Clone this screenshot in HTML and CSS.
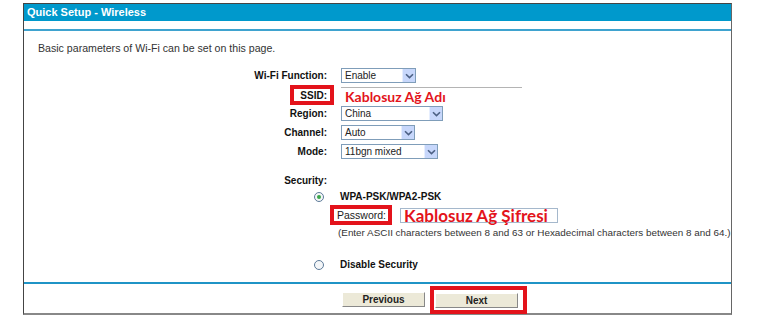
FILE: index.html
```html
<!DOCTYPE html>
<html lang="en">
<head>
    <meta charset="UTF-8">
    <title>Quick Setup - Wireless</title>
    <link rel="stylesheet" href="styles.css">
</head>
<body>
    <div class="frame">
        <div class="title">Quick Setup - Wireless</div>
        <div class="content">
            <p class="intro">Basic parameters of Wi-Fi can be set on this page.</p>

            <div class="fields">
                <div class="lbl">Wi-Fi Function:</div>
                <div class="val">
                    <div class="select w-enable"><span>Enable</span><span class="arrow"><svg width="9" height="6" viewBox="0 0 9 6"><path d="M1 1.2 L4.5 4.6 L8 1.2" fill="none" stroke="#4d6185" stroke-width="1.6"/></svg></span></div>
                </div>

                <div class="lbl"><span class="mark ssid-mark">SSID:</span></div>
                <div class="val"><div class="ssid-field">Kablosuz Ağ Adı</div></div>

                <div class="lbl">Region:</div>
                <div class="val">
                    <div class="select w-region"><span>China</span><span class="arrow"><svg width="9" height="6" viewBox="0 0 9 6"><path d="M1 1.2 L4.5 4.6 L8 1.2" fill="none" stroke="#4d6185" stroke-width="1.6"/></svg></span></div>
                </div>

                <div class="lbl">Channel:</div>
                <div class="val">
                    <div class="select w-channel"><span>Auto</span><span class="arrow"><svg width="9" height="6" viewBox="0 0 9 6"><path d="M1 1.2 L4.5 4.6 L8 1.2" fill="none" stroke="#4d6185" stroke-width="1.6"/></svg></span></div>
                </div>

                <div class="lbl">Mode:</div>
                <div class="val">
                    <div class="select w-mode"><span>11bgn mixed</span><span class="arrow"><svg width="9" height="6" viewBox="0 0 9 6"><path d="M1 1.2 L4.5 4.6 L8 1.2" fill="none" stroke="#4d6185" stroke-width="1.6"/></svg></span></div>
                </div>
            </div>

            <div class="security">
                <div class="lbl">Security:</div>
                <div></div>

                <div class="lbl"><span class="radio checked"></span></div>
                <div class="val opt">WPA-PSK/WPA2-PSK</div>

                <div></div>
                <div class="val pw-row">
                    <span class="mark pw-mark">Password:</span>
                    <span class="pw-input">Kablosuz Ağ Şifresi</span>
                </div>

                <div></div>
                <div class="val note">(Enter ASCII characters between 8 and 63 or Hexadecimal characters between 8 and 64.)</div>

                <div class="gap-row"></div>
                <div class="gap-row"></div>

                <div class="lbl"><span class="radio"></span></div>
                <div class="val opt">Disable Security</div>
            </div>
        </div>

        <div class="footer">
            <button class="btn">Previous</button>
            <span class="next-mark"><button class="btn">Next</button></span>
        </div>
    </div>
</body>
</html>
```

FILE: styles.css
```css
* {
    margin: 0;
    padding: 0;
    box-sizing: border-box;
}

body {
    background: #ffffff;
    font-family: "Liberation Sans", Arial, sans-serif;
    font-size: 10px;
    color: #222;
}

.frame {
    width: 709px;
    margin: 3px 0 0 23px;
    border: 1px solid #444;
    border-right-color: #666;
    border-bottom: 2px solid #888;
}

.title {
    height: 17px;
    line-height: 17px;
    background: #0099cc;
    color: #fff;
    font-weight: bold;
    font-size: 11px;
    padding-left: 3px;
}

.content {
    margin-top: 8px;
    border-top: 2px solid #3fa3cf;
    padding-bottom: 9px;
    border-bottom: 2px solid #1f94c6;
}

.intro {
    margin: 10px 0 0 14px;
    font-size: 10.6px;
    line-height: 14px;
    color: #333;
}

.fields,
.security {
    display: grid;
    grid-template-columns: 303px 1fr;
    column-gap: 14px;
    align-items: center;
}

.fields {
    margin-top: 11px;
    grid-auto-rows: 19px;
}

.security {
    margin-top: 12px;
    grid-template-rows: 14px 18px 20px 14px 16px 18px;
}

.lbl {
    text-align: right;
    font-weight: bold;
    color: #111;
    white-space: nowrap;
}

.val {
    display: flex;
    align-items: center;
}

.select {
    height: 15px;
    display: flex;
    align-items: center;
    justify-content: space-between;
    border: 1px solid #7f9db9;
    background: #fff;
    padding-left: 3px;
    font-size: 10px;
    color: #222;
}

.select .arrow {
    width: 13px;
    height: 13px;
    display: flex;
    align-items: center;
    justify-content: center;
    background: #c7d7fb;
    border-left: 1px solid #e6eefe;
}

.w-enable { width: 75px; }
.w-region { width: 102px; }
.w-channel { width: 74px; }
.w-mode { width: 97px; }

.mark {
    display: inline-block;
    border: 4px solid #e3131b;
    background: #fff;
}

.ssid-mark {
    padding: 2px 3px 0 6px;
    margin-right: -7px;
    line-height: 10px;
}

.ssid-field {
    width: 181px;
    height: 19px;
    margin-top: 3px;
    border-top: 1px solid #b4b4b4;
    padding-left: 4px;
    font-family: Lato, "Open Sans", sans-serif;
    font-weight: bold;
    font-size: 14px;
    line-height: 18px;
    color: #e3131b;
}

.radio {
    display: inline-block;
    width: 10px;
    height: 10px;
    margin-right: 3px;
    border: 1px solid #5d7b99;
    border-radius: 50%;
    background: #f4f6f8;
    position: relative;
    vertical-align: middle;
}

.radio.checked::after {
    content: '';
    position: absolute;
    left: 2px;
    top: 2px;
    width: 4px;
    height: 4px;
    border-radius: 50%;
    background: #3aa64a;
}

.opt {
    margin-left: -1px;
    font-weight: bold;
    color: #111;
}

.pw-row {
    margin-left: -11px;
    gap: 8px;
}

.pw-mark {
    padding: 1px 2px 0 3px;
    font-size: 10.5px;
    line-height: 11px;
    color: #222;
}

.pw-input {
    width: 158px;
    height: 15px;
    border: 1px solid #a5b8cc;
    padding-left: 3px;
    font-family: Lato, "Open Sans", sans-serif;
    font-weight: bold;
    font-size: 17px;
    line-height: 13px;
    color: #e3131b;
    white-space: nowrap;
}

.note {
    margin-left: -3px;
    font-size: 9.9px;
    color: #333;
    white-space: nowrap;
}

.footer {
    height: 29px;
    display: flex;
    align-items: center;
    padding: 2px 0 0 318px;
    gap: 5px;
}

.btn {
    width: 83px;
    height: 15px;
    background: #ece9d8;
    border: 1px solid #fff;
    border-right-color: #888;
    border-bottom-color: #888;
    font-family: "Liberation Sans", Arial, sans-serif;
    font-size: 10px;
    font-weight: bold;
    color: #222;
}

.next-mark {
    display: flex;
    border: 4px solid #e3131b;
    padding: 3px 5px 2px 1px;
}
```
